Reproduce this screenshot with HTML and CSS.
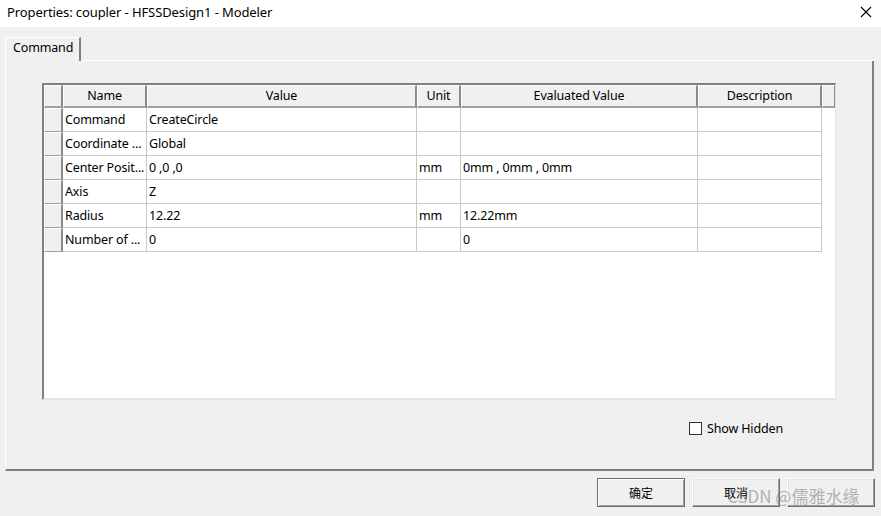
FILE: index.html
```html
<!DOCTYPE html>
<html>
<head>
<meta charset="utf-8">
<link rel="stylesheet" href="styles.css">
</head>
<body>
<div class="window">
  <div class="titlebar">
    <span class="title">Properties: coupler - HFSSDesign1 - Modeler</span>
    <svg class="close" width="12" height="12" viewBox="0 0 12 12"><path d="M1 1 L11 11 M11 1 L1 11" stroke="#000" stroke-width="1.1" fill="none"/></svg>
  </div>
  <div class="client">
    <div class="tabs"><div class="tab">Command</div><div class="tabline"></div></div>
    <div class="panel">
      <div class="frame">
        <div class="grid">
          <div class="hcell corner"></div>
          <div class="hcell">Name</div>
          <div class="hcell">Value</div>
          <div class="hcell">Unit</div>
          <div class="hcell">Evaluated Value</div>
          <div class="hcell">Description</div>
          <div class="hcell filler"></div>

          <div class="rh"></div><div class="cell">Command</div><div class="cell">CreateCircle</div><div class="cell"></div><div class="cell"></div><div class="cell"></div><div class="blank"></div>
          <div class="rh"></div><div class="cell">Coordinate ...</div><div class="cell">Global</div><div class="cell"></div><div class="cell"></div><div class="cell"></div><div class="blank"></div>
          <div class="rh"></div><div class="cell">Center Posit...</div><div class="cell">0 ,0 ,0</div><div class="cell">mm</div><div class="cell">0mm , 0mm , 0mm</div><div class="cell"></div><div class="blank"></div>
          <div class="rh"></div><div class="cell">Axis</div><div class="cell">Z</div><div class="cell"></div><div class="cell"></div><div class="cell"></div><div class="blank"></div>
          <div class="rh"></div><div class="cell">Radius</div><div class="cell">12.22</div><div class="cell">mm</div><div class="cell">12.22mm</div><div class="cell"></div><div class="blank"></div>
          <div class="rh"></div><div class="cell">Number of ...</div><div class="cell">0</div><div class="cell"></div><div class="cell">0</div><div class="cell"></div><div class="blank"></div>
        </div>
      </div>
      <div class="options">
        <label class="check"><span class="box"></span>Show Hidden</label>
      </div>
    </div>
    <div class="buttons">
      <button class="btn default">确定</button>
      <button class="btn">取消</button>
      <button class="btn"></button>
    </div>
  </div>
  <div class="watermark">CSDN @儒雅水缘</div>
</div>
</body>
</html>
```

FILE: styles.css
```css
html, body {
  margin: 0;
  padding: 0;
}
body {
  width: 881px;
  height: 516px;
  overflow: hidden;
  background: #f0f0f0;
  font-family: "Noto Sans", "Noto Sans CJK SC", sans-serif;
  font-size: 12.5px;
  letter-spacing: -0.15px;
  color: #000;
}
.window {
  position: relative;
  width: 881px;
  height: 516px;
  display: flex;
  flex-direction: column;
}
.titlebar {
  height: 27px;
  background: #fff;
  display: flex;
  align-items: center;
  justify-content: space-between;
  padding: 0 9px 3px 7px;
  box-sizing: border-box;
}
.title {
  font-size: 13px;
  letter-spacing: -0.1px;
}
.client {
  flex: 1;
  display: flex;
  flex-direction: column;
  padding: 10px 7px 0 5px;
}
.tabs {
  display: flex;
  align-items: flex-end;
  height: 24px;
}
.tab {
  width: 76px;
  height: 24px;
  box-sizing: border-box;
  border-top: 1px solid #fff;
  border-left: 1px solid #fff;
  border-right: 2px solid #808080;
  border-top-left-radius: 2px;
  padding: 0 0 0 7px;
  line-height: 20px;
}
.tabline {
  flex: 1;
  border-bottom: 1px solid #fff;
}
.panel {
  height: 410px;
  box-sizing: border-box;
  border-left: 1px solid #fff;
  border-right: 2px solid #808080;
  border-bottom: 2px solid #808080;
  display: flex;
  flex-direction: column;
  padding: 22px 0 0 36px;
}
.frame {
  width: 794px;
  height: 317px;
  box-sizing: border-box;
  background: #fff;
  border-top: 2px solid #808080;
  border-left: 2px solid #808080;
  border-right: 1px solid #e3e3e3;
  border-bottom: 2px solid #e3e3e3;
  overflow: hidden;
}
.grid {
  display: grid;
  grid-template-columns: 19px 84px 270px 44px 237px 124px 13px;
  grid-auto-rows: 24px;
  grid-template-rows: 23px;
}
.hcell {
  background: #f0f0f0;
  box-sizing: border-box;
  border-top: 1px solid #fff;
  border-left: 1px solid #fff;
  border-right: 2px solid #8c8c8c;
  border-bottom: 2px solid #a0a0a0;
  display: flex;
  align-items: center;
  justify-content: center;
  line-height: 16px;
}
.hcell.filler {
  border-right: 1px solid #8c8c8c;
}
.rh {
  background: #f0f0f0;
  box-sizing: border-box;
  border-top: 1px solid #fff;
  border-left: 1px solid #fff;
  border-right: 2px solid #8c8c8c;
  border-bottom: 1px solid #a0a0a0;
}
.cell {
  box-sizing: border-box;
  border-right: 1px solid #c8c8c8;
  border-bottom: 1px solid #c8c8c8;
  padding: 0 0 1px 2px;
  display: flex;
  align-items: center;
  white-space: nowrap;
  overflow: hidden;
}
.blank {
  background: #fff;
}
.options {
  display: flex;
  justify-content: flex-end;
  padding: 20px 89px 0 0;
}
.check {
  display: flex;
  align-items: center;
  gap: 5px;
}
.box {
  width: 11px;
  height: 11px;
  border: 1px solid #333;
  background: #fff;
}
.buttons {
  display: flex;
  justify-content: flex-end;
  gap: 7px;
  padding: 7px 0 0 0;
  margin-right: -1px;
}
.btn {
  width: 88px;
  height: 29px;
  box-sizing: border-box;
  background: #f0f0f0;
  border: 1px solid;
  border-color: #fff #6d6d6d #6d6d6d #fff;
  box-shadow: inset -1px -1px 0 #a0a0a0, inset 1px 1px 0 #e3e3e3;
  font-family: "Noto Sans CJK SC", sans-serif;
  font-size: 12px;
  padding: 0;
  color: #000;
}
.btn.default {
  border-color: #6d6d6d;
  box-shadow: inset 1px 1px 0 #fff, inset -1px -1px 0 #a0a0a0;
}
.watermark {
  position: absolute;
  left: 727px;
  top: 483px;
  font-family: "Noto Sans CJK SC", sans-serif;
  font-size: 17px;
  letter-spacing: 0;
  color: rgba(120, 120, 120, 0.55);
  white-space: nowrap;
}
```
